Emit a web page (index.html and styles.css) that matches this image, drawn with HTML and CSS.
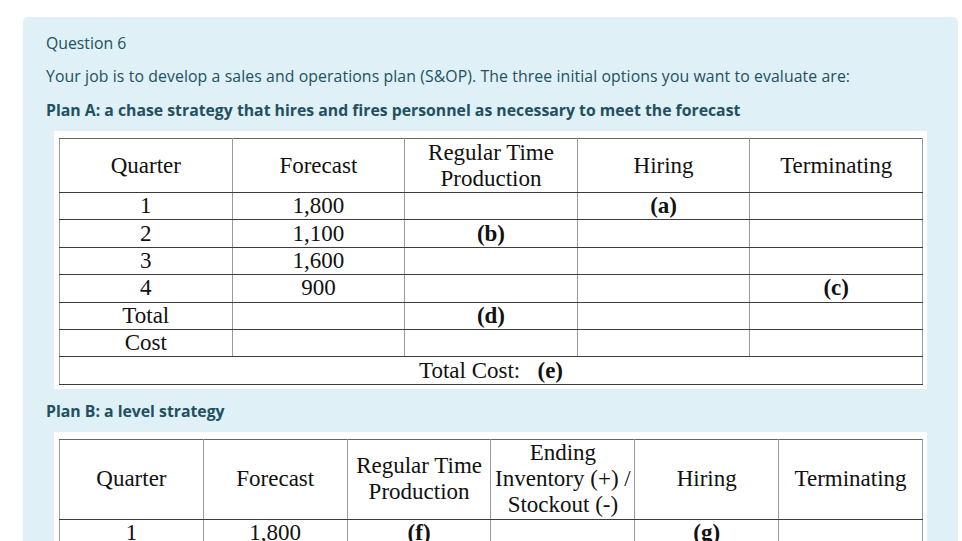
FILE: index.html
```html
<!DOCTYPE html>
<html>
<head>
<meta charset="utf-8">
<link rel="stylesheet" href="styles.css">
</head>
<body>
<div class="panel">
  <p class="qno">Question 6</p>
  <p class="intro">Your job is to develop a sales and operations plan (S&amp;OP). The three initial options you want to evaluate are:</p>
  <p class="plan">Plan A: a chase strategy that hires and fires personnel as necessary to meet the forecast</p>
  <div class="sheet">
    <table class="grid five">
      <tr class="head">
        <td>Quarter</td><td>Forecast</td><td>Regular Time<br>Production</td><td>Hiring</td><td>Terminating</td>
      </tr>
      <tr><td>1</td><td>1,800</td><td></td><td><b>(a)</b></td><td></td></tr>
      <tr><td>2</td><td>1,100</td><td><b>(b)</b></td><td></td><td></td></tr>
      <tr><td>3</td><td>1,600</td><td></td><td></td><td></td></tr>
      <tr><td>4</td><td>900</td><td></td><td></td><td><b>(c)</b></td></tr>
      <tr><td>Total</td><td></td><td><b>(d)</b></td><td></td><td></td></tr>
      <tr><td>Cost</td><td></td><td></td><td></td><td></td></tr>
      <tr><td colspan="5" class="total">Total Cost:&nbsp;&nbsp; <b>(e)</b></td></tr>
    </table>
  </div>
  <p class="plan planb">Plan B: a level strategy</p>
  <div class="sheet">
    <table class="grid six">
      <tr class="head">
        <td>Quarter</td><td>Forecast</td><td>Regular Time<br>Production</td><td>Ending<br>Inventory (+) /<br>Stockout (-)</td><td>Hiring</td><td>Terminating</td>
      </tr>
      <tr><td>1</td><td>1,800</td><td><b>(f)</b></td><td></td><td><b>(g)</b></td><td></td></tr>
      <tr><td>2</td><td>1,100</td><td></td><td></td><td></td><td></td></tr>
    </table>
  </div>
</div>
</body>
</html>
```
FILE: styles.css
```css
html, body {
  margin: 0;
  padding: 0;
  background: #ffffff;
  overflow: hidden;
}
body {
  font-family: "Open Sans", "Noto Sans", sans-serif;
  font-size: 15.8px;
  color: #22505f;
}
.panel {
  margin: 17px 4px 0 23px;
  padding: 15px 23px 40px 23px;
  background: #dff1f7;
  border-radius: 5px 5px 0 0;
  height: 600px;
  box-sizing: border-box;
}
.panel p {
  margin: 0;
  line-height: 22px;
  white-space: nowrap;
}
.intro {
  margin-top: 11px !important;
  letter-spacing: 0.1px;
}
.plan {
  margin-top: 12px !important;
  font-weight: 700;
}
.planb {
  margin-top: 11px !important;
}
.sheet {
  margin: 10px 0 0 8px;
  width: 873px;
  box-sizing: border-box;
  background: #ffffff;
  padding: 7px 4px 4px 5px;
}
.grid {
  width: 864px;
  border-collapse: collapse;
  table-layout: fixed;
  font-family: "Liberation Serif", "Times New Roman", serif;
  font-size: 23px;
  color: #111;
  border: 1.5px solid #7a7a7a;
}
.grid td {
  padding: 0;
  text-align: center;
  vertical-align: middle;
  line-height: 26px;
  height: 26.4px;
  border-top: 1px solid #3c3c3c;
  border-bottom: 1px solid #3c3c3c;
  border-left: 1px solid #9a9a9a;
  border-right: 1px solid #9a9a9a;
}
.grid .head td {
  border-top: 1.5px solid #666;
  height: 53px;
}
.grid b {
  font-weight: 700;
}
.six .head td {
  height: 79px;
}
```
